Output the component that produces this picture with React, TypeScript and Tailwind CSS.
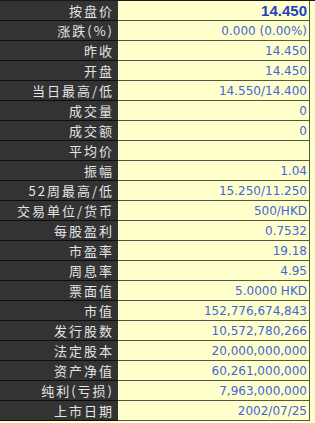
const rows: [string, string][] = [
  ["按盘价", "14.450"],
  ["涨跌(%)", "0.000 (0.00%)"],
  ["昨收", "14.450"],
  ["开盘", "14.450"],
  ["当日最高/低", "14.550/14.400"],
  ["成交量", "0"],
  ["成交额", "0"],
  ["平均价", ""],
  ["振幅", "1.04"],
  ["52周最高/低", "15.250/11.250"],
  ["交易单位/货币", "500/HKD"],
  ["每股盈利", "0.7532"],
  ["市盈率", "19.18"],
  ["周息率", "4.95"],
  ["票面值", "5.0000 HKD"],
  ["市值", "152,776,674,843"],
  ["发行股数", "10,572,780,266"],
  ["法定股本", "20,000,000,000"],
  ["资产净值", "60,261,000,000"],
  ["纯利(亏损)", "7,963,000,000"],
  ["上市日期", "2002/07/25"],
];

export default function App() {
  return (
    <div className="w-[315px] h-[423px] bg-[#ffffcc] overflow-hidden">
      <div className="border-t border-[#1a1a1a]">
        {rows.map(([label, value], i) => (
          <div key={i} className="flex h-[20px]">
            <div
              className="w-[118px] shrink-0 bg-[#333333] border-b border-[#0d0d0d] flex items-center justify-end pr-[4px] text-[13px] tracking-[2px] text-[#e4e4e4] leading-none"
              style={{ fontFamily: '"Noto Sans CJK SC", "DejaVu Sans", sans-serif' }}
            >
              {label}
            </div>
            <div className="flex-1 bg-[#ffffcc] border-b border-r border-[#55554a] mr-[5px] flex items-center justify-end pr-[2px] leading-none">
              {i === 0 ? (
                <span className="font-['Liberation_Sans',sans-serif] font-bold text-[15px] text-[#1f3fc4]">
                  {value}
                </span>
              ) : (
                <span className="font-['DejaVu_Sans',sans-serif] text-[12px] text-[#4466d8]">
                  {value}
                </span>
              )}
            </div>
          </div>
        ))}
      </div>
    </div>
  );
}
